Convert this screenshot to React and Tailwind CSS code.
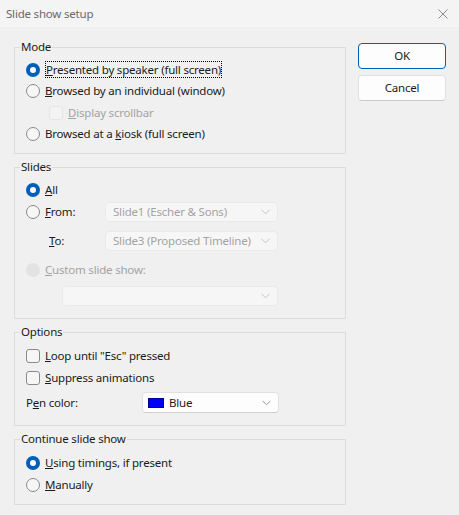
import React from "react";

const F = { fontFamily: '"Noto Sans", "Liberation Sans", sans-serif' };

function Radio({ checked, disabled }) {
  if (checked)
    return (
      <span className="w-[14px] h-[14px] rounded-full bg-[#005fb8] flex items-center justify-center shrink-0">
        <span className="w-[6px] h-[6px] rounded-full bg-white" />
      </span>
    );
  if (disabled)
    return <span className="w-[14px] h-[14px] rounded-full bg-[#e3e3e3] shrink-0" />;
  return <span className="w-[14px] h-[14px] rounded-full border border-[#8a8a8a] bg-[#f6f6f6] shrink-0" />;
}

function Check({ disabled }) {
  return (
    <span
      className={
        "w-[14px] h-[14px] rounded-[3px] shrink-0 border " +
        (disabled ? "border-[#e6e6e6] bg-[#f3f3f3]" : "border-[#8a8a8a] bg-[#f6f6f6]")
      }
    />
  );
}

function Chevron({ light }) {
  return (
    <svg width="9" height="6" viewBox="0 0 9 6" className="shrink-0">
      <path d="M0.5 0.8 L4.5 4.8 L8.5 0.8" fill="none" stroke={light ? "#c4c4c4" : "#9a9a9a"} strokeWidth="1" />
    </svg>
  );
}

function Select({ text, className, disabled, children }) {
  return (
    <div
      className={
        "flex items-center justify-between rounded-[4px] border pl-[7px] pr-[7px] " +
        (disabled
          ? "border-[#eaeaea] bg-[#f6f6f6] text-[#a3a3a3] "
          : "border-[#e0e0e0] border-b-[#cfcfcf] bg-[#fdfdfd] text-[#1b1b1b] ") +
        className
      }
    >
      <span className="flex items-center gap-[4px] whitespace-nowrap">
        {children}
        {text}
      </span>
      <Chevron light={disabled} />
    </div>
  );
}

function Group({ title, className, children }) {
  return (
    <fieldset className={"border border-[#dcdcdc] pl-[5px] " + (className || "")}>
      <legend className="px-[1px] leading-[16px] text-[#1b1b1b]">{title}</legend>
      <div className="pl-[6px]">{children}</div>
    </fieldset>
  );
}

function Row({ children, className }) {
  return <div className={"flex items-center gap-[5px] " + (className || "")}>{children}</div>;
}

export default function App() {
  return (
    <div
      className="w-[459px] h-[515px] bg-[#f0f0f0] text-[11.5px] tracking-[-0.2px] text-[#1b1b1b] overflow-hidden"
      style={F}
    >
      <div className="h-[27px] bg-[#f4f4f4] flex items-center justify-between pl-[6px] pr-[11px]">
        <span className="text-[#6a6a6a]">Slide show setup</span>
        <svg width="10" height="10" viewBox="0 0 10 10">
          <path d="M0.5 0.5 L9.5 9.5 M9.5 0.5 L0.5 9.5" stroke="#8a8a8a" strokeWidth="1" />
        </svg>
      </div>
      <div className="flex pl-[14px] pt-[12px] gap-[12px]">
        <div className="w-[332px] flex flex-col gap-[5px]">
          <Group title="Mode" className="pb-[8px]">
            <div className="pt-[4px]">
              <Row className="h-[21px]">
                <Radio checked />
                <span className="border border-dotted border-black leading-[15px]">
                  <u>P</u>resented by speaker (full screen)
                </span>
              </Row>
              <Row className="h-[22px]">
                <Radio />
                <span>
                  <u>B</u>rowsed by an individual (window)
                </span>
              </Row>
              <Row className="h-[21px] pl-[23px] gap-[4px]">
                <Check disabled />
                <span className="text-[#a3a3a3]">
                  <u>D</u>isplay scrollbar
                </span>
              </Row>
              <Row className="h-[22px]">
                <Radio />
                <span>
                  Browsed at a <u>k</u>iosk (full screen)
                </span>
              </Row>
            </div>
          </Group>

          <Group title="Slides" className="pb-[12px]">
            <div className="pt-[4px]">
              <Row className="h-[22px]">
                <Radio checked />
                <span>
                  <u>A</u>ll
                </span>
              </Row>
              <div className="flex items-center h-[22px]">
                <Row className="w-[79px]">
                  <Radio />
                  <span>
                    <u>F</u>rom:
                  </span>
                </Row>
                <Select disabled text="Slide1 (Escher & Sons)" className="w-[173px] h-[20px]" />
              </div>
              <div className="flex items-center h-[29px] pt-[7px]">
                <span className="w-[79px] pl-[23px]">
                  <u>T</u>o:
                </span>
                <Select disabled text="Slide3 (Proposed Timeline)" className="w-[173px] h-[20px]" />
              </div>
              <Row className="h-[29px] pt-[7px]">
                <Radio disabled />
                <span className="text-[#a3a3a3]">
                  <u>C</u>ustom slide show:
                </span>
              </Row>
              <div className="pl-[36px] pt-[5px]">
                <Select disabled text="" className="w-[216px] h-[20px]" />
              </div>
            </div>
          </Group>

          <Group title="Options" className="pb-[12px]">
            <div className="pt-[5px]">
              <Row className="h-[22px]">
                <Check />
                <span>
                  <u>L</u>oop until "Esc" pressed
                </span>
              </Row>
              <Row className="h-[22px]">
                <Check />
                <span>
                  <u>S</u>uppress animations
                </span>
              </Row>
              <div className="flex items-center h-[21px] mt-[3px]">
                <span className="w-[116px]">
                  P<u>e</u>n color:
                </span>
                <Select text="Blue" className="w-[137px] h-[21px] !pl-[5px]">
                  <span className="w-[16px] h-[10px] bg-[#0000ff] border border-[#00009a] mr-[1px]" />
                </Select>
              </div>
            </div>
          </Group>

          <Group title="Continue slide show" className="pb-[8px]">
            <div className="pt-[5px]">
              <Row className="h-[22px]">
                <Radio checked />
                <span>
                  <u>U</u>sing timings, if present
                </span>
              </Row>
              <Row className="h-[22px]">
                <Radio />
                <span>
                  <u>M</u>anually
                </span>
              </Row>
            </div>
          </Group>
        </div>

        <div className="flex flex-col gap-[6px] pt-[4px]">
          <button className="w-[88px] h-[26px] rounded-[4px] border border-[#005fb8] bg-[#fdfdfd] text-[#1b1b1b]">
            OK
          </button>
          <button className="w-[88px] h-[26px] rounded-[4px] border border-[#e0e0e0] border-b-[#cccccc] bg-[#fdfdfd] text-[#1b1b1b]">
            Cancel
          </button>
        </div>
      </div>
    </div>
  );
}
